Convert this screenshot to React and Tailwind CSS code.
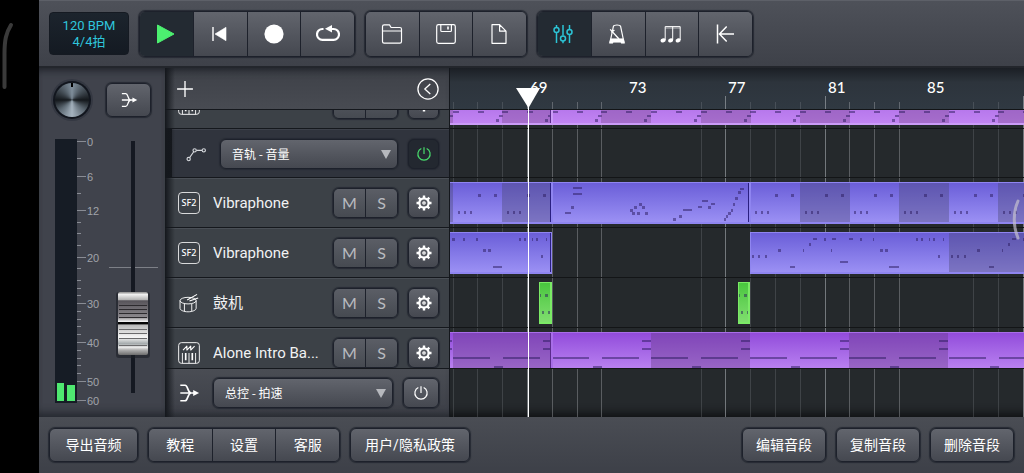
import clsx from "clsx";

const BAR = 24.8;
const ORIGIN_BAR = 69;
const ORIGIN_X = 77;

const barX = (bar) => Math.round(ORIGIN_X + (bar - ORIGIN_BAR) * BAR);

const KEY = "bg-linear-to-b from-[#62656d] to-[#454850] text-white";
const FRAME = "rounded-md border border-[#1d212b] shadow-[0_0_1px_1px_#262a33]";

/* ---------- icons ---------- */

function Icon({ size = 24, children, ...rest }) {
  return (
    <svg
      width={size}
      height={size}
      viewBox="0 0 24 24"
      fill="none"
      stroke="currentColor"
      strokeWidth="1.2"
      strokeLinejoin="round"
      aria-hidden="true"
      className="shrink-0"
      {...rest}
    >
      {children}
    </svg>
  );
}

const PlayIcon = () => (
  <Icon>
    <path d="M3.500 3v18L20 12z" fill="#4cf070" stroke="#4cf070" strokeWidth="1" />
  </Icon>
);

const RewindIcon = () => (
  <Icon>
    <path d="M5 5v14" strokeWidth="1.4" />
    <path d="M18 5.300v13.400L7 12z" fill="currentColor" strokeWidth="0.6" />
  </Icon>
);

const RecordIcon = () => (
  <Icon>
    <circle cx="12" cy="12" r="9.6" fill="currentColor" stroke="none" />
  </Icon>
);

const LoopIcon = () => (
  <Icon>
    <path d="M7.500 7H6.400a5.300 5.300 0 0 0 0 10.800h11.200a5.300 5.300 0 0 0 0-10.800H15" strokeWidth="2.2" />
    <path d="M9 6.800l7-3.800v7.400z" fill="currentColor" stroke="none" />
  </Icon>
);

const FolderIcon = () => (
  <Icon>
    <path d="M2.500 19.500v-15c0-1 .6-1.600 1.600-1.600h5.400l1.600 2.600h8.800c1 0 1.600.6 1.600 1.600v12.400c0 1-.6 1.600-1.600 1.600H4.100c-1 0-1.600-.6-1.600-1.600zM2.500 9h19" />
  </Icon>
);

const SaveIcon = () => (
  <Icon>
    <rect x="2.7" y="2.7" width="18.6" height="18.6" rx="1.8" />
    <path d="M6.800 3v5.400c0 .7.4 1.100 1.100 1.100h8.400c.7 0 1.100-.4 1.100-1.100V3" />
    <path d="M14 4.600v3" strokeWidth="1.6" />
  </Icon>
);

const FileIcon = () => (
  <Icon>
    <path d="M4 2.700h7.600L18 9.200v12.100H4zM11.600 2.700v6.500H18" />
  </Icon>
);

const MixerIcon = () => (
  <Icon strokeWidth="1.5">
    <path d="M4.500 3v2.200M4.500 10.600V21M11 3v10.600M11 19v2.200M17.500 3v4.200M17.500 12.800V21" />
    <circle cx="4.5" cy="7.9" r="2.5" />
    <circle cx="11" cy="16.4" r="2.5" />
    <circle cx="17.5" cy="10" r="2.5" />
  </Icon>
);

const MetronomeIcon = () => (
  <Icon>
    <path d="M4 20.500L7.400 4.400C7.600 3.500 8.600 3 11 3s3.400.5 3.600 1.400L18 20.500" />
    <path d="M3.400 21.200l1.200-4.400h12.800l1.200 4.400h-3.400l-.4-1H7.200l-.4 1z" fill="currentColor" strokeWidth="0.6" />
    <path d="M4.200 7.400L13 17M5.400 10.400l3-2.400" strokeWidth="1.4" />
  </Icon>
);

const TripletIcon = () => (
  <Icon strokeWidth="1">
    <path d="M5.200 18V4.600h15V18M12.700 4.600V18" />
    <path d="M5.200 6h15" strokeWidth="0.6" />
    <g fill="currentColor" stroke="none">
      <ellipse cx="3.1" cy="18.4" rx="2.6" ry="2" transform="rotate(-20 3.1 18.4)" />
      <ellipse cx="10.6" cy="18.4" rx="2.6" ry="2" transform="rotate(-20 10.6 18.4)" />
      <ellipse cx="18.1" cy="18.4" rx="2.6" ry="2" transform="rotate(-20 18.1 18.4)" />
    </g>
  </Icon>
);

const ReturnIcon = () => (
  <Icon strokeWidth="1.5" strokeLinejoin="miter">
    <path d="M3.500 2.500v19M20 12H6M12.700 4.600L5.500 12l7.200 7.400" />
  </Icon>
);

const MergeIcon = ({ size = 24 }) => (
  <Icon size={size} strokeWidth="1.8">
    <path d="M2.500 3.500h5.200c3.400 0 2.600 8.500 6.600 8.500M2.500 20.500h5.200c3.400 0 2.600-8.500 6.600-8.500M2.500 12h16" />
    <path d="M16.600 8.800L23 12l-6.400 3.200z" fill="currentColor" stroke="none" />
  </Icon>
);

const GearIcon = () => (
  <Icon size={18} stroke="#fff">
    <circle cx="12" cy="12" r="6.2" strokeWidth="3" />
    <circle cx="12" cy="12" r="1.6" strokeWidth="1.6" />
    <path
      d="M12 2v4M12 18v4M2 12h4M18 12h4M4.900 4.900l2.800 2.800M16.300 16.300l2.800 2.800M4.900 19.100l2.800-2.800M16.300 7.700l2.800-2.800"
      strokeWidth="3.2"
    />
  </Icon>
);

const PowerIcon = ({ color = "#fff" }) => (
  <Icon size={16} stroke={color} strokeWidth="1.8">
    <path d="M12 2v10M8 3.800a9.200 9.200 0 1 0 8 0" />
  </Icon>
);

const CurveIcon = () => (
  <Icon size={22} strokeWidth="1.2" stroke="#d5d8dc">
    <circle cx="4" cy="17.5" r="1.8" />
    <circle cx="10.5" cy="8" r="1.8" />
    <circle cx="20.5" cy="8" r="1.8" />
    <path d="M5 15.900l4.500-6.400M12.400 8h6.200" />
  </Icon>
);

const DrumIcon = () => (
  <Icon size={22} strokeWidth="1">
    <ellipse cx="11" cy="9.4" rx="8.8" ry="3.6" />
    <path d="M2.200 9.400v8.400c0 2 4 3.800 8.800 3.800s8.800-1.800 8.800-3.800V9.400M7 13v8M15 13v8" />
    <path d="M10 8.800l10.800-6.200M12.500 9.800l9.500-3.200" strokeWidth="1.2" />
  </Icon>
);

const SynthIcon = () => (
  <Icon size={22} strokeWidth="1">
    <rect x="0.7" y="0.7" width="22.6" height="22.6" rx="3" />
    <path d="M5.500 8.800l4.200-4.400v4.400l4.200-4.400v4.400l4.200-4.400" strokeWidth="1.2" />
    <path d="M4.800 12v11M12 12v11M19.200 12v11" />
    <path d="M8.400 12v8M15.600 12v8" strokeWidth="1.8" />
  </Icon>
);

const Sf2Icon = () => (
  <span className="flex size-[22px] items-center justify-center rounded-sm border border-white/80 font-['Noto_Sans',sans-serif] text-[9px] leading-3 font-medium">
    SF2
  </span>
);

/* ---------- top bar ---------- */

function KeyGroup({ items }) {
  return (
    <div className={clsx(FRAME, "flex h-[46px] overflow-hidden")}>
      {items.map(({ label, icon: Glyph, on }, i) => (
        <button
          key={label}
          aria-label={label}
          className={clsx(
            "flex flex-1 items-center justify-center",
            i > 0 && "border-l border-[#1d212b]",
            on ? "bg-[#232a32] text-[#2cc4d6]" : KEY
          )}
        >
          <Glyph />
        </button>
      ))}
    </div>
  );
}

const TRANSPORT = [
  { label: "Play", icon: PlayIcon, on: true },
  { label: "Rewind", icon: RewindIcon },
  { label: "Record", icon: RecordIcon },
  { label: "Loop", icon: LoopIcon },
];

const FILES = [
  { label: "Open", icon: FolderIcon },
  { label: "Save", icon: SaveIcon },
  { label: "New", icon: FileIcon },
];

const TOOLS = [
  { label: "Mixer", icon: MixerIcon, on: true },
  { label: "Metronome", icon: MetronomeIcon },
  { label: "Quantize", icon: TripletIcon },
  { label: "Back to start", icon: ReturnIcon },
];

function TopBar() {
  return (
    <header className="flex h-[68px] shrink-0 items-center gap-2.5 border-t border-b-2 border-t-[#5d6068] border-b-[#23262c] bg-linear-to-b from-[#4e5159] to-[#3e4149] px-2.5">
      <button className="h-[43px] w-20 rounded-sm border border-[#151a22] bg-linear-to-b from-[#1c242d] to-[#141a22] text-[13px] leading-4 text-[#2fc6dc]">
        120 BPM
        <br />
        4/4拍
      </button>
      <div className="w-[216px]">
        <KeyGroup items={TRANSPORT} />
      </div>
      <div className="w-[162px]">
        <KeyGroup items={FILES} />
      </div>
      <div className="w-[216px]">
        <KeyGroup items={TOOLS} />
      </div>
    </header>
  );
}

/* ---------- master strip ---------- */

const SCALE = [
  [0, 10],
  [6, 45],
  [12, 79],
  [20, 126],
  [30, 172],
  [40, 211],
  [50, 250],
  [60, 269],
];
const MINOR = [27, 62, 91, 102, 114, 137, 149, 157, 164, 180, 188, 195, 203, 219, 227, 234, 242];

function FaderDrawing() {
  return (
    <svg width="126" height="285" viewBox="0 0 126 285" aria-hidden="true">
      <defs>
        <linearGradient id="cap" x1="0" y1="0" x2="0" y2="1">
          <stop offset="0" stopColor="#8d8d8d" />
          <stop offset="0.04" stopColor="#f0f0f0" />
          <stop offset="0.12" stopColor="#b5b5b5" />
          <stop offset="0.14" stopColor="#57545a" />
          <stop offset="0.4" stopColor="#8b888d" />
          <stop offset="0.47" stopColor="#f2f2f2" />
          <stop offset="0.48" stopColor="#050505" />
          <stop offset="0.51" stopColor="#050505" />
          <stop offset="0.52" stopColor="#b9b9b9" />
          <stop offset="0.72" stopColor="#f6f6f6" />
          <stop offset="0.82" stopColor="#a5abad" />
          <stop offset="0.88" stopColor="#e8e8e8" />
          <stop offset="0.92" stopColor="#b0b0b0" />
          <stop offset="1" stopColor="#6d6d6d" />
        </linearGradient>
      </defs>
      <rect x="16" y="7" width="22" height="264" fill="#161c25" />
      <rect x="18" y="251" width="7" height="18" fill="#4fe870" />
      <rect x="28" y="253" width="8" height="16" fill="#4fe870" />
      <g fill="#898c94">
        {SCALE.map(([db, y]) => (
          <rect key={db} x="38" y={y - 1} width="9" height="1" />
        ))}
        {MINOR.map((y) => (
          <rect key={y} x="38" y={y - 1} width="4" height="1" />
        ))}
      </g>
      <g fill="#a0a3aa" fontSize="11" fontFamily="Liberation Sans, sans-serif">
        {SCALE.map(([db, y]) => (
          <text key={db} x="48" y={y + 4}>
            {db}
          </text>
        ))}
      </g>
      <rect x="70" y="135" width="49" height="1" fill="#7d8087" />
      <rect x="92" y="9" width="4" height="252" fill="#151922" />
      <rect x="77" y="160" width="34" height="66" rx="3" fill="#1c1f26" opacity="0.6" />
      <rect x="79" y="160" width="30" height="63" rx="2" fill="url(#cap)" />
      <g fill="#2c2a2e">
        <rect x="80" y="173" width="28" height="1" />
        <rect x="80" y="177" width="28" height="1" />
        <rect x="80" y="181" width="28" height="1" />
        <rect x="80" y="185" width="28" height="1" />
      </g>
      <g fill="#6a6a6c">
        <rect x="80" y="197" width="28" height="1" />
        <rect x="80" y="201" width="28" height="1" />
        <rect x="80" y="206" width="28" height="1" />
        <rect x="80" y="213" width="28" height="1" />
      </g>
    </svg>
  );
}

function MasterStrip() {
  return (
    <section className="w-[126px] shrink-0 bg-[#40434c] shadow-[inset_0_8px_8px_-6px_#1d2027,inset_0_-10px_8px_-6px_#24272e]">
      <div className="flex h-16 items-center justify-between pr-3.5 pl-3">
        <div className="relative flex size-[42px] items-center justify-center rounded-full bg-[#343842]">
          <div className="flex size-[38px] items-center justify-center rounded-full bg-[#12161e]">
            <div className="flex size-[34px] justify-center rounded-full bg-[conic-gradient(#7f8e9b,#4a545d_45deg,#14181c_90deg,#5d6973_130deg,#a5b3bf_180deg,#5d6973_230deg,#14181c_270deg,#4a545d_315deg,#7f8e9b)]">
              <span className="h-1 w-0.5 bg-black" />
            </div>
          </div>
          <input type="range" aria-label="Pan" className="absolute inset-0 w-full opacity-0" />
        </div>
        <button aria-label="Routing" className={clsx(FRAME, KEY, "flex h-[34px] w-[45px] items-center justify-center")}>
          <MergeIcon size={18} />
        </button>
      </div>
      <div className="relative">
        <FaderDrawing />
        <input
          type="range"
          aria-label="Master volume"
          className="absolute inset-y-0 right-4 w-8 opacity-0 [writing-mode:vertical-lr]"
        />
      </div>
    </section>
  );
}

/* ---------- track list ---------- */

const SOFT_KEY = "flex-1 bg-linear-to-b from-[#5b5e66] to-[#464a51] text-[#b9bbc0]";

function MuteSolo() {
  return (
    <div className={clsx(FRAME, "flex h-[30px] w-[65px] shrink-0 overflow-hidden font-[Lato,sans-serif] text-base")}>
      <button aria-label="Mute" className={SOFT_KEY}>
        M
      </button>
      <button aria-label="Solo" className={clsx(SOFT_KEY, "border-l border-[#1d212b]")}>
        S
      </button>
    </div>
  );
}

function TrackRow({ name, icon: Glyph }) {
  return (
    <div className="flex h-[50px] w-full shrink-0 items-center border-t border-b border-t-[#4a4f56] border-b-[#15181d] bg-[#3c4147] pr-2.5 pl-[13px]">
      <span className="flex w-[22px] justify-center text-white">
        <Glyph />
      </span>
      <span className="ml-[13px] min-w-0 flex-1 truncate text-[15px] leading-5 text-[#f1f2f3]">{name}</span>
      <MuteSolo />
      <button
        aria-label={`${name} settings`}
        className={clsx(FRAME, KEY, "ml-2.5 flex h-[30px] w-[31px] shrink-0 items-center justify-center")}
      >
        <GearIcon />
      </button>
    </div>
  );
}

function Picker({ label, value }) {
  return (
    <div className="relative min-w-0 flex-1">
      <select
        aria-label={label}
        className={clsx(
          FRAME,
          KEY,
          "block h-[30px] w-full appearance-none pl-[11px] font-['Noto_Sans_CJK_SC',sans-serif] text-[12px] leading-4"
        )}
      >
        <option>{value}</option>
      </select>
      <svg
        width="10"
        height="9"
        viewBox="0 0 10 9"
        aria-hidden="true"
        className="pointer-events-none absolute top-[11px] right-[7px]"
      >
        <path d="M0 0h10L5 9z" fill="#b6b8bd" />
      </svg>
    </div>
  );
}

function TrackList() {
  return (
    <section className="relative flex w-[285px] shrink-0 flex-col border-r border-[#14171c]">
      <div className="flex h-[42px] shrink-0 items-center justify-between border-b border-[#15181d] bg-linear-to-b from-[#3e4148] to-[#484b52] px-2.5 text-white shadow-[inset_0_8px_8px_-6px_#1d2027]">
        <button aria-label="Add track" className="flex size-5 items-center justify-center">
          <Icon size={20} strokeWidth="1.6">
            <path d="M12 2.500v19M2.500 12h19" />
          </Icon>
        </button>
        <button aria-label="Collapse" className="flex size-[22px] items-center justify-center">
          <Icon size={22} strokeWidth="1.4">
            <circle cx="12" cy="12" r="11" />
            <path d="M14.500 6.500L8.500 12l6 5.500" />
          </Icon>
        </button>
      </div>
      <div className="flex h-[19px] shrink-0 items-end overflow-hidden">
        <TrackRow name="" icon={SynthIcon} />
      </div>
      <div className="h-[49px] shrink-0 bg-[#15181d] pl-[7px]">
        <div className="flex h-full items-center border-t border-b border-t-[#3d414a] border-b-[#15181d] bg-[#30343d] pr-2.5 pl-[13px] text-white">
          <CurveIcon />
          <div className="ml-[13px] flex min-w-0 flex-1">
            <Picker label="Automation" value="音轨 - 音量" />
          </div>
          <button
            aria-label="Automation on"
            className={clsx(FRAME, "ml-2.5 flex h-[30px] w-[31px] items-center justify-center bg-[#232830]")}
          >
            <PowerIcon color="#48dc6c" />
          </button>
        </div>
      </div>
      <TrackRow name="Vibraphone" icon={Sf2Icon} />
      <TrackRow name="Vibraphone" icon={Sf2Icon} />
      <TrackRow name="鼓机" icon={DrumIcon} />
      <div className="h-[41px] shrink-0 overflow-hidden border-b border-[#15181d]">
        <TrackRow name="Alone Intro Ba..." icon={SynthIcon} />
      </div>
      <div className="flex min-h-12 flex-1 items-center bg-linear-to-b from-[#4a4d54] to-[#3c3f47] pr-2.5 pl-[13px] text-white shadow-[inset_0_-8px_8px_-6px_#22252b]">
        <MergeIcon size={22} />
        <div className="ml-[13px] flex min-w-0 flex-1">
          <Picker label="Master automation" value="总控 - 拍速" />
        </div>
        <button
          aria-label="Master automation on"
          className={clsx(FRAME, KEY, "ml-2.5 flex h-[30px] w-9 items-center justify-center")}
        >
          <PowerIcon />
        </button>
      </div>
      <div className="pointer-events-none absolute inset-y-0 left-0 w-2.5 bg-linear-to-r from-[#14171c] to-transparent" />
    </section>
  );
}

/* ---------- timeline ---------- */

const PALETTE = {
  lilac: {
    body: "bg-linear-to-b from-[#a35fe0] to-[#c184f2]",
    edge: "border-[#cb9bf7]",
    end: "bg-[#5b2a8c]",
    shade: "#7a4a8c",
  },
  blue: {
    body: "bg-linear-to-b from-[#6b5ed8] to-[#9b90f4]",
    edge: "border-[#8f85f0]",
    end: "bg-[#2a1f80]",
    shade: "#4a4870",
  },
  violet: {
    body: "bg-linear-to-b from-[#924bdb] to-[#bd85f2]",
    edge: "border-[#a86ee8]",
    end: "bg-[#5b2a8c]",
    shade: "#633a80",
  },
  green: {
    body: "bg-linear-to-b from-[#48c63e] to-[#7fde6e]",
    edge: "border-[#7bea66]",
    end: "bg-[#7bea66]",
    shade: "#2c7a2a",
  },
};

// notes are [x, y, width] in pixels from the start of a loop
function Clip({ from, to, color, loop, notes }) {
  const { body, edge, end, shade } = PALETTE[color];
  const left = barX(from);
  const width = barX(to) - left;
  const step = loop ?? to - from;
  const loops = Array.from({ length: Math.ceil((to - from) / step) }, (_, i) => i);

  return (
    <div
      className={clsx("absolute top-1 h-[42px] overflow-hidden border border-b-2", body, edge)}
      style={{ left, width }}
    >
      <svg width={width} height="42" className="-mt-px -ml-px" aria-hidden="true">
        {loops.map((i) => {
          const x = barX(from + i * step) - left;
          return (
            <g key={i} transform={`translate(${x} 0)`}>
              {loop && i % 2 === 1 && (
                <rect width={Math.round(step * BAR)} height="42" fill={shade} opacity="0.38" />
              )}
              {notes.map(([nx, ny, nw], n) => (
                <rect key={n} x={nx} y={ny} width={nw} height={nw < 4 ? 3 : 2} fill="#2a1a5c" opacity="0.5" />
              ))}
            </g>
          );
        })}
      </svg>
      <div className={clsx("absolute inset-y-0 right-0 w-px", end)} />
    </div>
  );
}

const ARP = [[0, 28, 6], [25, 28, 6], [43, 36, 3], [46, 32, 4]];
const PULSE = [[5, 29, 2], [11, 29, 2], [17, 29, 2], [25, 12, 3], [41, 12, 3]];
const BREAK = [
  [21, 5, 9], [21, 11, 9], [19, 24, 3], [13, 30, 6],
  [78, 27, 3], [80, 30, 3], [82, 24, 3], [85, 30, 3], [87, 21, 3], [90, 24, 3], [93, 30, 3],
  [121, 36, 3], [127, 33, 3], [131, 27, 9], [146, 24, 4], [150, 18, 6], [156, 24, 3], [159, 21, 4],
  [172, 36, 2], [174, 33, 2], [176, 30, 3], [179, 27, 2], [181, 21, 2], [183, 15, 3], [186, 9, 3], [188, 6, 4],
];
const MELODY_A = [
  [24, 6, 3], [35, 6, 2], [48, 6, 2], [91, 6, 2], [96, 6, 2], [104, 6, 1], [108, 6, 2], [118, 6, 1],
  [55, 17, 3], [60, 17, 3], [113, 23, 2], [65, 34, 9],
];
const MELODY_B = [
  [2, 23, 2], [8, 23, 2], [15, 23, 2], [28, 17, 3], [53, 17, 1], [59, 11, 2], [63, 6, 4], [74, 6, 2], [82, 6, 4],
  [81, 17, 1], [99, 6, 4], [110, 6, 2], [123, 6, 1], [130, 17, 3], [135, 17, 3], [166, 6, 2], [171, 6, 2],
  [179, 6, 1], [183, 6, 2], [193, 6, 1], [188, 23, 2], [90, 29, 8], [40, 34, 5], [139, 34, 10],
];
const HIT = [[0, 12, 2], [6, 12, 3], [3, 29, 2], [9, 29, 2]];
const BASS = [[0, 25, 37], [50, 25, 37], [41, 34, 9], [90, 8, 9], [90, 16, 9]];

const LABELS = [69, 73, 77, 81, 85];
const BARS = Array.from({ length: 48 }, (_, i) => 66 + i);
const BRIGHT = [69, 70, 71, 72, 77, 81, 82, 83, 84, 89];
const HIDDEN = [73, 74, 75, 85, 86];

function Grid() {
  return (
    <svg className="absolute inset-0 size-full" aria-hidden="true">
      {BARS.filter((bar) => !HIDDEN.includes(bar)).map((bar) => {
        const tall = bar % 4 === 1;
        return (
          <rect
            key={bar}
            x={barX(bar)}
            y={tall ? 28 : 34}
            width="1"
            height="100%"
            fill="#a9adb2"
            opacity={tall ? 0.6 : BRIGHT.includes(bar) ? 0.4 : 0.2}
          />
        );
      })}
    </svg>
  );
}

function Lane({ className, children }) {
  return (
    <div className={clsx("relative shrink-0 overflow-hidden border-b border-[#131517]", className)}>{children}</div>
  );
}

function Timeline() {
  return (
    <section className="relative flex min-w-0 flex-1 flex-col overflow-hidden bg-[#25292c]">
      <div className="absolute inset-x-0 top-0 h-[41px] bg-linear-to-b from-[#1b1f25] via-[#2d343c] via-35% to-[#303942]" />
      <Grid />
      <div className="relative h-[42px] shrink-0 border-b border-[#131517] font-[Lato,sans-serif] text-[15px] leading-5 font-medium text-white">
        {LABELS.map((bar) => (
          <span key={bar} className="absolute top-[9px]" style={{ left: barX(bar) + 3 }}>
            {bar}
          </span>
        ))}
      </div>
      <Lane className="h-[19px]">
        <div className="absolute inset-x-0 -bottom-px h-[50px]">
          <Clip from={62} to={70} color="lilac" loop={2} notes={ARP} />
          <Clip from={70} to={102} color="lilac" loop={2} notes={ARP} />
        </div>
      </Lane>
      <Lane className="h-[49px]" />
      <Lane className="h-[50px]">
        <Clip from={62} to={70} color="blue" loop={2} notes={PULSE} />
        <Clip from={70} to={78} color="blue" notes={BREAK} />
        <Clip from={78} to={110} color="blue" loop={2} notes={PULSE} />
      </Lane>
      <Lane className="h-[50px]">
        <Clip from={65} to={70} color="blue" notes={MELODY_A} />
        <Clip from={78} to={110} color="blue" loop={8} notes={MELODY_B} />
      </Lane>
      <Lane className="h-[50px]">
        <Clip from={69.5} to={70} color="green" notes={HIT} />
        <Clip from={77.5} to={78} color="green" notes={HIT} />
      </Lane>
      <Lane className="h-[41px]">
        <Clip from={62} to={70} color="violet" loop={4} notes={BASS} />
        <Clip from={70} to={110} color="violet" loop={4} notes={BASS} />
      </Lane>
      <div className="min-h-12 flex-1 shadow-[inset_0_-10px_8px_-6px_#101214]" />
      <svg width="24" height="100%" className="absolute inset-y-0 left-[66px] h-full" aria-hidden="true">
        <path d="M0 20h24L12.500 40z" fill="#fff" />
        <rect x="12" y="38" width="1" height="100%" fill="#fff" />
      </svg>
    </section>
  );
}

/* ---------- bottom bar ---------- */

function TextKey({ children, className }) {
  return <button className={clsx(FRAME, KEY, "h-[34px] text-[14px] leading-5", className)}>{children}</button>;
}

function BottomBar() {
  return (
    <footer className="flex h-14 shrink-0 items-center gap-2.5 bg-linear-to-b from-[#4a4d54] to-[#3d4048] px-2.5">
      <TextKey className="w-[89px]">导出音频</TextKey>
      <div className={clsx(FRAME, "flex h-[34px] w-48 overflow-hidden text-[14px] leading-5")}>
        {["教程", "设置", "客服"].map((label, i) => (
          <button key={label} className={clsx(KEY, "flex-1", i > 0 && "border-l border-[#1d212b]")}>
            {label}
          </button>
        ))}
      </div>
      <TextKey className="w-[120px]">用户/隐私政策</TextKey>
      <div className="ml-auto flex gap-2.5">
        {["编辑音段", "复制音段", "删除音段"].map((label) => (
          <TextKey key={label} className="w-[84px]">
            {label}
          </TextKey>
        ))}
      </div>
    </footer>
  );
}

export default function App() {
  return (
    <div className="relative flex min-h-screen overflow-hidden bg-black font-[Roboto,'Noto_Sans_CJK_SC',sans-serif]">
      <div className="w-[39px] shrink-0">
        <svg width="39" height="100" fill="none" aria-hidden="true">
          <path d="M11 25C6 33 4.500 40 4.500 54v33" stroke="#3a3a3a" strokeWidth="4" strokeLinecap="round" />
        </svg>
      </div>
      <main className="flex min-w-0 flex-1 flex-col">
        <TopBar />
        <div className="flex flex-1">
          <MasterStrip />
          <TrackList />
          <Timeline />
        </div>
        <BottomBar />
      </main>
      <svg width="12" height="44" fill="none" aria-hidden="true" className="absolute top-[198px] right-0">
        <path d="M6 3C1 14 1 28 6 40" stroke="#c4c1cf" strokeWidth="3" strokeLinecap="round" opacity="0.7" />
      </svg>
    </div>
  );
}
